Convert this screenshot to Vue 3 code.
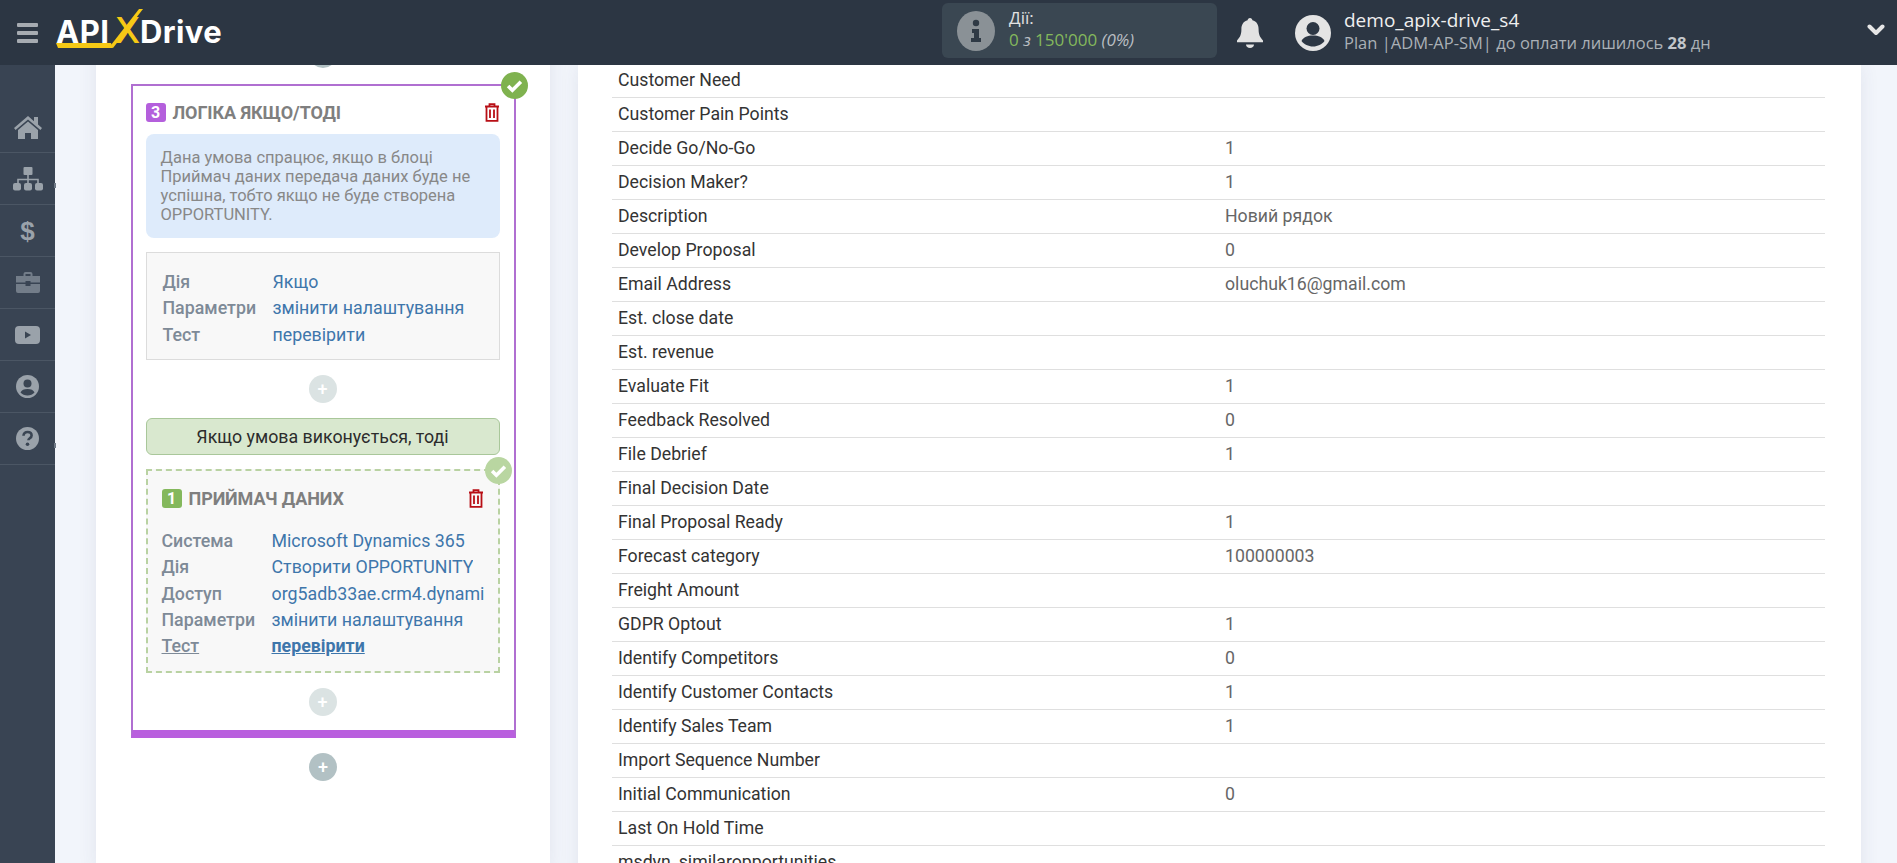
<script setup>
const rows = [
  ['Customer Need', ''], ['Customer Pain Points', ''], ['Decide Go/No-Go', '1'], ['Decision Maker?', '1'],
  ['Description', 'Новий рядок'], ['Develop Proposal', '0'], ['Email Address', 'oluchuk16@gmail.com'],
  ['Est. close date', ''], ['Est. revenue', ''], ['Evaluate Fit', '1'], ['Feedback Resolved', '0'],
  ['File Debrief', '1'], ['Final Decision Date', ''], ['Final Proposal Ready', '1'], ['Forecast category', '100000003'],
  ['Freight Amount', ''], ['GDPR Optout', '1'], ['Identify Competitors', '0'], ['Identify Customer Contacts', '1'],
  ['Identify Sales Team', '1'], ['Import Sequence Number', ''], ['Initial Communication', '0'],
  ['Last On Hold Time', ''], ['msdyn_similaropportunities', '']
]
const logicRows = [['Дія', 'Якщо'], ['Параметри', 'змінити налаштування'], ['Тест', 'перевірити']]
const destRows = [
  ['Система', 'Microsoft Dynamics 365'], ['Дія', 'Створити OPPORTUNITY'],
  ['Доступ', 'org5adb33ae.crm4.dynamics.com'], ['Параметри', 'змінити налаштування']
]
</script>

<template>
  <div class="app">
    <header class="top">
      <div class="burger"><i></i><i></i><i></i></div>
      <div class="logo">
        <span class="api">API</span><span class="x">X</span><span class="drive">Drive</span>
        <svg class="logo-mark" width="90" height="50" viewBox="0 0 90 50">
          <polygon points="0,43 55,43 57,48 2,48" fill="#f6c915" />
          <polygon points="57,48 55,45 83,9 87,9" fill="#f6c915" />
        </svg>
      </div>
      <div class="actions">
        <span class="info-ic">
          <svg width="38" height="40" viewBox="0 0 38 40">
            <ellipse cx="19" cy="20" rx="19" ry="20" fill="#8a9196" />
            <circle cx="19" cy="12" r="3.2" fill="#2f3a45" />
            <path d="M15 18h7v9h2v4H14v-4h3v-5h-2z" fill="#2f3a45" />
          </svg>
        </span>
        <div class="actions-text">
          <div class="actions-title">Дії:</div>
          <div class="actions-val"><span class="g">0</span> <em>з</em> <span class="g">150'000</span> <em>(0%)</em></div>
        </div>
      </div>
      <svg class="bell" width="26" height="30" viewBox="0 0 26 30">
        <path d="M13 0c1.4 0 2.4 1 2.4 2.3 4.2 1 6.2 4.500 6.200 9 0 5.500 1.400 8 4.400 11.200v1.800H0v-1.800C3 19.300 4.400 16.800 4.400 11.300c0-4.500 2-8 6.200-9C10.600 1 11.600 0 13 0z" fill="#e2e2e2" />
        <path d="M9 26.500h8c0 2-1.800 3.500-4 3.500s-4-1.500-4-3.500z" fill="#e2e2e2" />
      </svg>
      <svg class="user-ic" width="36" height="36" viewBox="0 0 36 36">
        <circle cx="18" cy="18" r="18" fill="#e4e4e4" />
        <circle cx="18" cy="13.500" r="6.500" fill="#2d3744" />
        <path d="M6.500 26c2-4 6-5.500 11.500-5.500S27.500 22 29.500 26c-2.500 3.200-6.800 5.500-11.500 5.500S9 29.200 6.500 26z" fill="#2d3744" />
      </svg>
      <div class="user-text">
        <div class="user-name">demo_apix-drive_s4</div>
        <div class="user-plan">Plan |ADM-AP-SM| до оплати лишилось <b>28</b> дн</div>
      </div>
      <svg class="chev" width="18" height="12" viewBox="0 0 18 12">
        <path d="M2.500 2.500L9 9l6.500-6.500" fill="none" stroke="#e6e6e6" stroke-width="4" stroke-linecap="round" stroke-linejoin="round" />
      </svg>
    </header>

    <div class="body">
      <nav class="side">
        <div class="cell">
          <svg width="28" height="24" viewBox="0 0 28 24">
            <path d="M14 1L0 13l1.600 2L14 4.500 26.400 15l1.600-2-4-3.400V2h-4v4.200z" fill="#9aa2aa" />
            <path d="M14 6.500L4 15v9h7v-6h6v6h7v-9z" fill="#9aa2aa" />
          </svg>
        </div>
        <div class="cell">
          <svg width="30" height="24" viewBox="0 0 30 24">
            <rect x="10.500" y="0" width="9" height="8" rx="1" fill="#9aa2aa" />
            <path d="M15 8v4M5 16v-3.500h20V16M15 12v4" fill="none" stroke="#9aa2aa" stroke-width="1.600" />
            <rect x="0" y="16" width="8" height="7.500" rx="2" fill="#9aa2aa" /><rect x="11" y="16" width="8" height="7.500" rx="2" fill="#9aa2aa" /><rect x="22" y="16" width="8" height="7.500" rx="2" fill="#9aa2aa" />
          </svg>
        </div>
        <div class="cell"><span class="dollar">$</span></div>
        <div class="cell">
          <svg width="24" height="21" viewBox="0 0 24 21">
            <path d="M7.500 4V2a2 2 0 0 1 2-2h5a2 2 0 0 1 2 2v2H24v6.500H14.500V9h-5v1.500H0V4zM9.500 2v2h5V2z" fill="#737d89" fill-rule="evenodd" />
            <path d="M0 12h9.500v2h5v-2H24v7a2 2 0 0 1-2 2H2a2 2 0 0 1-2-2z" fill="#737d89" />
          </svg>
        </div>
        <div class="cell">
          <svg width="25" height="18" viewBox="0 0 25 18">
            <rect width="25" height="18" rx="4" fill="#9aa2aa" />
            <path d="M10 5.500l6 3.500-6 3.500z" fill="#3a4553" />
          </svg>
        </div>
        <div class="cell">
          <svg width="23" height="23" viewBox="0 0 23 23">
            <circle cx="11.500" cy="11.500" r="11.500" fill="#9aa2aa" />
            <circle cx="11.500" cy="8.500" r="4" fill="#3a4553" />
            <path d="M4.500 17.500c1-2.500 3.500-3.500 7-3.500s6 1 7 3.500c-1.700 2-4.200 3-7 3s-5.300-1-7-3z" fill="#3a4553" />
          </svg>
        </div>
        <div class="cell">
          <svg width="23" height="23" viewBox="0 0 23 23">
            <circle cx="11.500" cy="11.500" r="11.500" fill="#9aa2aa" />
            <path d="M7.500 8.800c0-2.300 1.800-3.800 4.100-3.800s4 1.400 4 3.500c0 2.800-3.200 2.700-3.200 4.700" fill="none" stroke="#3a4553" stroke-width="2.600" />
            <circle cx="11.500" cy="17.300" r="1.800" fill="#3a4553" />
          </svg>
        </div>
        <span class="notch n1"></span>
        <span class="notch n2"></span>
      </nav>

      <main class="main">
        <section class="left">
          <div class="plus dark cut"></div>

          <div class="logic">
            <span class="check big">
              <svg width="17" height="14" viewBox="0 0 16 13"><path d="M2 6.500l4 4 8-8" fill="none" stroke="#fff" stroke-width="3.400" /></svg>
            </span>
            <div class="block-head">
              <span class="badge purple">3</span>
              <span class="block-title">ЛОГІКА ЯКЩО/ТОДІ</span>
              <svg class="trash" width="16" height="19" viewBox="0 0 16 19">
                <path d="M1 3.500h14M5.500 3.500V1.200h5v2.300M2.500 3.500v14.300h11V3.500M6 6.500v8.500M10 6.500v8.500" fill="none" stroke="#b80f16" stroke-width="1.800" />
              </svg>
            </div>
            <div class="note">Дана умова спрацює, якщо в блоці Приймач даних передача даних буде не успішна, тобто якщо не буде створена OPPORTUNITY.</div>
            <div class="settings">
              <div v-for="r in logicRows" :key="r[0]" class="kv">
                <span class="k">{{ r[0] }}</span><span class="v">{{ r[1] }}</span>
              </div>
            </div>
            <div class="plus light mid">+</div>
            <div class="cond">Якщо умова виконується, тоді</div>
            <div class="dest">
              <span class="check small">
                <svg width="17" height="14" viewBox="0 0 16 13"><path d="M2 6.500l4 4 8-8" fill="none" stroke="#fff" stroke-width="3.400" /></svg>
              </span>
              <div class="block-head dest-head">
                <span class="badge green">1</span>
                <span class="block-title">ПРИЙМАЧ ДАНИХ</span>
                <svg class="trash" width="16" height="19" viewBox="0 0 16 19">
                  <path d="M1 3.500h14M5.500 3.500V1.200h5v2.300M2.500 3.500v14.300h11V3.500M6 6.500v8.500M10 6.500v8.500" fill="none" stroke="#b80f16" stroke-width="1.800" />
                </svg>
              </div>
              <div class="dest-rows">
                <div v-for="r in destRows" :key="r[0]" class="kv">
                  <span class="k">{{ r[0] }}</span><span class="v clip">{{ r[1] }}</span>
                </div>
                <div class="kv">
                  <span class="k under">Тест</span><span class="v active">перевірити</span>
                </div>
              </div>
            </div>
            <div class="plus light last">+</div>
          </div>

          <div class="plus dark after">+</div>
        </section>

        <section class="right">
          <div class="table">
            <div v-for="r in rows" :key="r[0]" class="row">
              <span class="name">{{ r[0] }}</span><span class="val">{{ r[1] }}</span>
            </div>
          </div>
        </section>
      </main>
    </div>
  </div>
</template>

<style>
html, body { margin: 0; height: 100%; overflow: hidden; }
</style>

<style scoped>
.app { height: 863px; width: 1897px; display: flex; flex-direction: column; overflow: hidden; font-family: Roboto, "Liberation Sans", sans-serif; background: #f2f5fb; }
.top { height: 65px; flex: none; background: #2c3643; display: flex; align-items: center; position: relative; z-index: 2; font-family: "Open Sans", "Liberation Sans", sans-serif; }
.burger { margin-left: 17px; width: 21px; display: flex; flex-direction: column; gap: 4px; }
.burger i { display: block; height: 4px; background: #a6abb1; border-radius: 1px; }
.logo { margin-left: 18px; width: 170px; height: 65px; position: relative; display: flex; align-items: baseline; color: #fff; font-family: Inter, "Open Sans", sans-serif; font-weight: 700; font-size: 31px; white-space: nowrap; padding-top: 8px; box-sizing: border-box; }
.api { width: 59px; letter-spacing: 0.5px; }
.x { color: #f6c915; font-size: 36px; font-weight: 500; width: 25px; }
.drive { letter-spacing: 0.4px; }
.logo-mark { position: absolute; left: 0; top: 0; }
.actions { margin-left: 716px; width: 275px; height: 55px; margin-top: -4px; background: #3a4752; border-radius: 6px; display: flex; align-items: center; box-sizing: border-box; padding-left: 15px; }
.info-ic { display: flex; }
.actions-text { margin-left: 14px; margin-top: -3px; }
.actions-title { color: #e2e2e2; font-size: 17px; line-height: 22px; }
.actions-val { font-size: 17px; line-height: 22px; color: #b9bec2; white-space: nowrap; }
.actions-val em { font-style: italic; }
.g { color: #84b85c; }
.bell { margin-left: 20px; }
.user-ic { margin-left: 32px; }
.user-text { margin-left: 13px; margin-top: -4px; white-space: nowrap; }
.user-name { font-size: 19px; line-height: 25px; color: #efefef; }
.user-plan { font-size: 16.500px; line-height: 20px; color: #aab0b6; }
.user-plan b { font-weight: 700; color: #c3c7cb; }
.chev { position: absolute; left: 1867px; top: 24px; }

.body { flex: 1; min-height: 0; display: flex; }
.side { width: 55px; flex: none; background: #394453; padding-top: 36px; box-sizing: border-box; position: relative; }
.cell { height: 52px; border-bottom: 1px solid #4b5664; box-sizing: border-box; display: flex; align-items: center; justify-content: center; }
.dollar { font-family: "Liberation Sans", sans-serif; font-weight: 700; font-size: 26px; color: #9aa2aa; line-height: 1; }
.notch { position: absolute; left: 54px; width: 2px; height: 5px; background: #6f7986; }
.n1 { top: 118px; }
.n2 { top: 378px; }

.main { flex: 1; min-width: 0; display: flex; align-items: flex-start; gap: 28px; padding-left: 41px; overflow: hidden; }
.left { width: 454px; height: 830px; flex: none; background: #fff; box-shadow: 0 0 18px rgba(60, 70, 100, 0.09); display: flex; flex-direction: column; align-items: center; margin-top: -25px; box-sizing: border-box; }
.plus { width: 28px; height: 28px; border-radius: 50%; color: #fff; font-size: 18px; font-weight: 500; line-height: 27px; text-align: center; flex: none; }
.plus.dark { background: #b2c1c4; }
.plus.light { background: #dbe3e3; }
.plus.after { margin-top: 15px; }
.plus.mid { margin: 15px auto; }
.plus.last { margin: 15px auto 14px; }

.logic { width: 385px; margin-top: 16px; box-sizing: border-box; border: 2px solid #b06fd1; border-bottom: 8px solid #b95fde; padding: 0 14px 0 13px; position: relative; }
.check { position: absolute; border-radius: 50%; display: flex; align-items: center; justify-content: center; }
.check.big { width: 27px; height: 27px; right: -14px; top: -14px; background: #7fb24f; }
.check.small { width: 27px; height: 27px; right: -14px; top: -14px; background: #b9d6a1; }
.block-head { display: flex; align-items: center; height: 20px; margin-top: 16px; }
.badge { width: 20px; height: 19px; border-radius: 3px; color: #fff; font-size: 16px; font-weight: 700; display: flex; align-items: center; justify-content: center; flex: none; }
.purple { background: #b45fdc; }
.green { background: #84b85c; }
.block-title { margin-left: 7px; font-size: 18px; font-weight: 700; color: #7f7f7f; white-space: nowrap; letter-spacing: -0.1px; }
.trash { margin-left: auto; flex: none; }
.note { margin-top: 12px; height: 104px; box-sizing: border-box; background: #deebfb; border-radius: 8px; padding: 14px 15px; font-size: 16.500px; line-height: 19px; color: #888; }
.settings { margin-top: 14px; height: 108px; box-sizing: border-box; background: #f8f8f8; border: 1px solid #dcdcdc; padding: 16px 16px 14px; }
.kv { display: flex; height: 26.300px; line-height: 26.300px; font-size: 17.800px; white-space: nowrap; }
.k { width: 110px; flex: none; color: #7e8a97; font-weight: 500; }
.v { color: #3e76ab; }
.clip { overflow: hidden; }
.under { text-decoration: underline; }
.active { font-weight: 700; text-decoration: underline; }
.cond { height: 37px; box-sizing: border-box; background: #d9e8cf; border: 1px solid #a9c79a; border-radius: 6px; font-size: 17.800px; line-height: 35px; text-align: center; color: #2c2c2c; }
.dest { margin-top: 14px; height: 204px; box-sizing: border-box; background: #f8f8f8; border: 2px dashed #b9d2a2; padding: 0 14px; position: relative; }
.dest-head { margin-top: 17px; }
.dest-rows { margin-top: 20px; }

.right { width: 1283px; height: 830px; flex: none; background: #fff; box-shadow: 0 0 18px rgba(60, 70, 100, 0.09); box-sizing: border-box; padding: 0 36px 0 34px; overflow: hidden; }
.table { margin-top: -1px; }
.row { height: 34px; box-sizing: border-box; border-bottom: 1px solid #dfdfdf; display: flex; font-size: 17.700px; line-height: 33px; padding-left: 6px; }
.name { width: 607px; flex: none; color: #333; }
.val { color: #666; }
</style>
